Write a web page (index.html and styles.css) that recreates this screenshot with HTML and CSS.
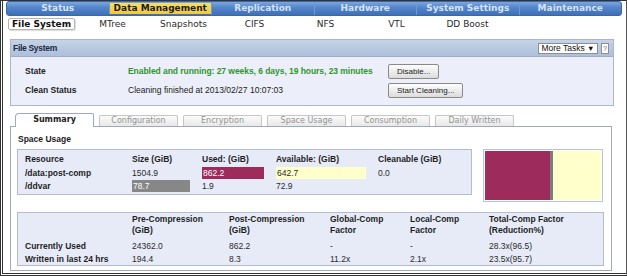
FILE: index.html
```html
<!DOCTYPE html>
<html lang="en">
<head>
    <meta charset="UTF-8">
    <title>File System</title>
    <link rel="stylesheet" href="styles.css">
</head>
<body>
    <div class="frame">
        <ul class="topnav">
            <li>Status</li>
            <li class="on">Data Management</li>
            <li>Replication</li>
            <li>Hardware</li>
            <li>System Settings</li>
            <li>Maintenance</li>
        </ul>
        <ul class="subnav">
            <li class="on"><span>File System</span></li>
            <li>MTree</li>
            <li>Snapshots</li>
            <li>CIFS</li>
            <li>NFS</li>
            <li>VTL</li>
            <li>DD Boost</li>
        </ul>

        <div class="panel">
            <div class="panel-head">
                <span class="title">File System</span>
                <div class="tools">
                    <button class="more">More Tasks <span class="arrow">&#9660;</span></button>
                    <button class="help">?</button>
                </div>
            </div>
            <div class="panel-body">
                <div class="lbl">State</div>
                <div class="ok">Enabled and running: 27 weeks, 6 days, 19 hours, 23 minutes</div>
                <div><button class="btn">Disable...</button></div>
                <div class="lbl">Clean Status</div>
                <div>Cleaning finished at 2013/02/27 10:07:03</div>
                <div><button class="btn">Start Cleaning...</button></div>
            </div>
        </div>

        <ul class="tabs">
            <li class="on">Summary</li>
            <li>Configuration</li>
            <li>Encryption</li>
            <li>Space Usage</li>
            <li>Consumption</li>
            <li>Daily Written</li>
        </ul>
        <div class="tabbox">
            <h3>Space Usage</h3>
            <div class="usage">
                <table class="grid space">
                    <tr>
                        <th class="c1">Resource</th>
                        <th class="c2">Size (GiB)</th>
                        <th class="c3">Used: (GiB)</th>
                        <th class="c4">Available: (GiB)</th>
                        <th>Cleanable (GiB)</th>
                    </tr>
                    <tr>
                        <th>/data:post-comp</th>
                        <td>1504.9</td>
                        <td><span class="bar used">862.2</span></td>
                        <td><span class="bar avail">642.7</span></td>
                        <td>0.0</td>
                    </tr>
                    <tr>
                        <th>/ddvar</th>
                        <td><span class="bar size">78.7</span></td>
                        <td>1.9</td>
                        <td>72.9</td>
                        <td></td>
                    </tr>
                </table>
                <div class="chart">
                    <div class="seg-used"></div>
                    <div class="seg-sep"></div>
                    <div class="seg-avail"></div>
                </div>
            </div>
            <table class="grid comp">
                <tr class="head">
                    <th class="k1"></th>
                    <th class="k2">Pre-Compression<br>(GiB)</th>
                    <th class="k3">Post-Compression<br>(GiB)</th>
                    <th class="k4">Global-Comp<br>Factor</th>
                    <th class="k5">Local-Comp<br>Factor</th>
                    <th>Total-Comp Factor<br>(Reduction%)</th>
                </tr>
                <tr>
                    <th>Currently Used</th>
                    <td>24362.0</td>
                    <td>862.2</td>
                    <td>-</td>
                    <td>-</td>
                    <td>28.3x(96.5)</td>
                </tr>
                <tr>
                    <th>Written in last 24 hrs</th>
                    <td>194.4</td>
                    <td>8.3</td>
                    <td>11.2x</td>
                    <td>2.1x</td>
                    <td>23.5x(95.7)</td>
                </tr>
            </table>
        </div>
    </div>
</body>
</html>
```

FILE: styles.css
```css
body {
    margin: 0;
    font-family: 'Liberation Sans', Arial, sans-serif;
    font-size: 8.5px;
    color: #222;
    background-color: #fff;
}
.frame {
    width: 627px;
    height: 276px;
    box-sizing: border-box;
    border-top: 1px solid #333;
    border-left: 3px double #333;
    border-right: 1px solid #555;
    border-bottom: 3px double #333;
    overflow: hidden;
}

/* main navigation */
.topnav {
    display: flex;
    list-style: none;
    margin: 0 4px 0 3px;
    padding: 0;
    height: 15px;
    box-sizing: border-box;
    border: 1px solid #3b67a6;
    border-radius: 3px;
    background: linear-gradient(#7ca6de, #5384c9 45%, #3e70b9);
}
.topnav li {
    flex: 1;
    text-align: center;
    font: bold 9px 'DejaVu Sans', Verdana, sans-serif;
    line-height: 13px;
    color: #d6e3f6;
}
.topnav li + li {
    border-left: 1px solid #7099d0;
}
.topnav li.on {
    margin: 1px 0;
    line-height: 11px;
    color: #1c1c1c;
    background: linear-gradient(#f8de62, #efc93c);
}
.subnav {
    display: flex;
    list-style: none;
    margin: 1px 0 0 3px;
    padding: 0;
    height: 13px;
}
.subnav li {
    width: 71px;
    text-align: center;
    font: 9px 'DejaVu Sans', Verdana, sans-serif;
    line-height: 12px;
    padding-top: 1px;
    color: #2a2a2a;
}
.subnav li.on span {
    display: block;
    margin: 0 2px;
    line-height: 10px;
    font-weight: bold;
    color: #111;
    border: 1px solid #b4b4b4;
    border-radius: 2px;
    box-shadow: 1px 1px 1px #ddd;
}

/* file system panel */
.panel {
    margin: 9px 12px 0 7px;
    border: 1px solid #a9b6cb;
}
.panel-head {
    display: flex;
    align-items: center;
    justify-content: space-between;
    height: 16px;
    padding: 0 4px 0 2px;
    background: linear-gradient(#c6d3e7, #adbfda);
    border-bottom: 1px solid #9eadc6;
}
.panel-head .title {
    font-weight: bold;
    font-size: 8.5px;
    letter-spacing: -0.3px;
    color: #1b2a42;
}
.tools {
    display: flex;
    gap: 3px;
}
.tools button {
    height: 11px;
    padding: 0 2px;
    font-family: 'Liberation Sans', Arial, sans-serif;
    font-size: 8.5px;
    line-height: 9px;
    color: #111;
    background: #fff;
    border: 1px solid #8e8e8e;
    border-radius: 0;
}
.tools .more {
    width: 60px;
    white-space: nowrap;
}
.tools .arrow {
    font-size: 7.5px;
}
.tools .help {
    width: 8px;
    padding: 0;
    font-size: 7px;
    color: #555;
}
.panel-body {
    display: grid;
    grid-template-columns: 103px 260px auto;
    grid-auto-rows: 16px;
    row-gap: 3px;
    align-items: center;
    padding: 6px 0 7px 14px;
    background-color: #eceff9;
}
.lbl {
    font-weight: bold;
}
.ok {
    font-weight: bold;
    color: #2e952e;
    letter-spacing: -0.05px;
}
.btn {
    height: 15px;
    padding: 0 8px;
    font-family: 'Liberation Sans', Arial, sans-serif;
    font-size: 8px;
    color: #222;
    background: linear-gradient(#fdfdfd, #dcdcdc);
    border: 1px solid #8a8a8a;
    border-radius: 2px;
}

/* tabs */
.tabs {
    display: flex;
    align-items: flex-end;
    gap: 5px;
    list-style: none;
    margin: 7px 0 0 12px;
    padding: 0;
    height: 13px;
}
.tabs li {
    width: 77px;
    height: 10px;
    text-align: center;
    font: 8px 'DejaVu Sans', Verdana, sans-serif;
    line-height: 10px;
    color: #939393;
    background: linear-gradient(#fbfbfb, #e8e8e8);
    border: 1px solid #c6c6c6;
    border-bottom: none;
    border-radius: 2px 2px 0 0;
}
.tabs li.on {
    position: relative;
    z-index: 1;
    height: 13px;
    margin-bottom: -1px;
    line-height: 12px;
    font-weight: bold;
    color: #222;
    background: #fff;
    border-color: #9ea9ba;
    border-radius: 4px 2px 0 0;
}
.tabbox {
    height: 145px;
    box-sizing: border-box;
    margin: 0 14px 0 7px;
    padding: 7px 0 0 6px;
    border: 1px solid #9ea9ba;
}
.tabbox h3 {
    margin: 0 0 4px 1px;
    font-size: 8.5px;
    line-height: 11px;
    color: #1c1c1c;
}

/* tables */
.usage {
    display: flex;
    align-items: flex-start;
    gap: 11px;
}
.grid {
    border-collapse: separate;
    border-spacing: 0;
    background-color: #e7ebf8;
    border: 1px solid #b3bccb;
}
.grid th,
.grid td {
    padding: 0;
    text-align: left;
    vertical-align: middle;
}
.grid th {
    font-weight: bold;
    color: #1e1e1e;
}
.grid td {
    color: #2a2a2a;
}
.space {
    width: 455px;
    height: 46px;
    padding: 1px 0 2px 7px;
    table-layout: fixed;
}
.space tr {
    height: 13px;
}
.space tr:first-child {
    height: 15px;
}
.space .c1 { width: 107px; }
.space .c2 { width: 70px; }
.space .c3 { width: 74px; }
.space .c4 { width: 102px; }
.bar {
    display: block;
    width: calc(100% - 12px);
    height: 12px;
    line-height: 12px;
    padding-left: 1px;
    box-sizing: border-box;
}
.bar.used {
    background-color: #9d2c5d;
    color: #fff;
}
.bar.size {
    background-color: #878787;
    color: #fff;
}
.bar.avail {
    background-color: #ffffcc;
}
.chart {
    display: flex;
    width: 120px;
    height: 53px;
    box-sizing: border-box;
    padding: 1px;
    border: 1px solid #bcc4d2;
    background: #fff;
}
.seg-used {
    width: 65px;
    background-color: #9d2c5d;
}
.seg-sep {
    width: 3px;
    background-color: #7c7c7c;
}
.seg-avail {
    flex: 1;
    background-color: #ffffcc;
}
.comp {
    width: 587px;
    margin-top: 10px;
    padding: 1px 0 0 7px;
    table-layout: fixed;
}
.comp .head th {
    line-height: 11px;
    padding-bottom: 3px;
}
.comp tr {
    height: 13px;
}
.comp .k1 { width: 107px; }
.comp .k2 { width: 97px; }
.comp .k3 { width: 101px; }
.comp .k4 { width: 80px; }
.comp .k5 { width: 79px; }
```
